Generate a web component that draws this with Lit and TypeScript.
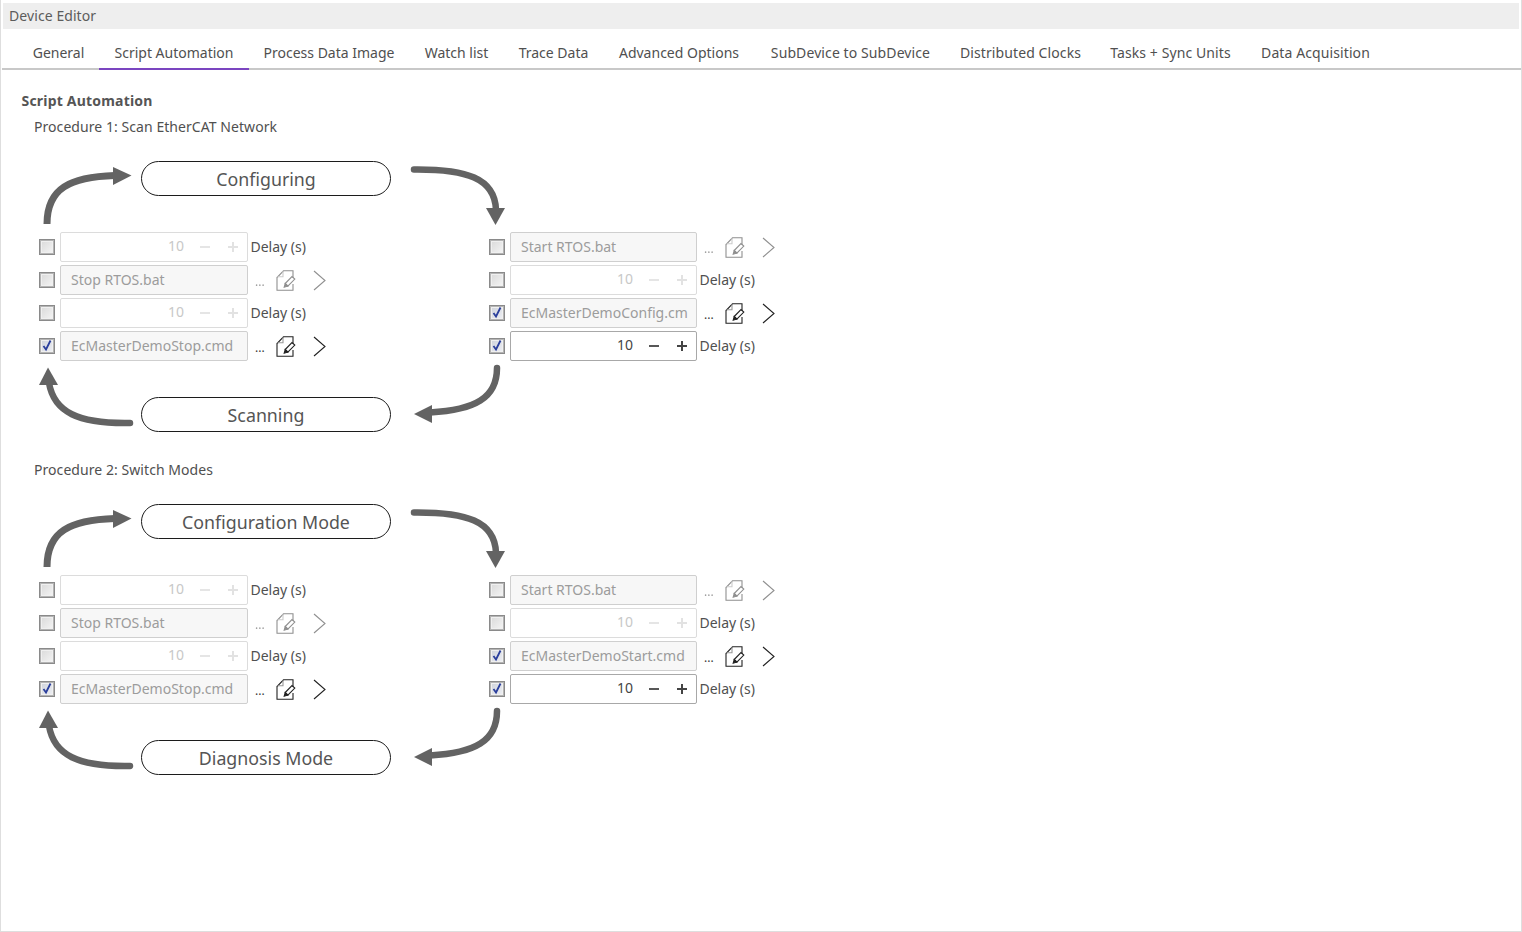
import { LitElement, html, css, svg } from "lit";
import { customElement, property } from "lit/decorators.js";

const TABS: { label: string; width: number; wide?: boolean }[] = [
  { label: "General", width: 81 },
  { label: "Script Automation", width: 150 },
  { label: "Process Data Image", width: 160 },
  { label: "Watch list", width: 95 },
  { label: "Trace Data", width: 99 },
  { label: "Advanced Options", width: 152 },
  { label: "SubDevice to SubDevice", width: 191, wide: true },
  { label: "Distributed Clocks", width: 149, wide: true },
  { label: "Tasks + Sync Units", width: 151, wide: true },
  { label: "Data Acquisition", width: 139, wide: true },
];

type Row = { kind: "delay" | "file"; checked: boolean; name?: string };

@customElement("script-row")
class ScriptRow extends LitElement {
  @property({ type: Object }) row!: Row;
  static styles = css`
    :host { display: flex; align-items: center; height: 30px; color: #505050; }
    .cb { width: 16px; height: 16px; border: 1px solid #8a8a8a; box-sizing: border-box; margin-right: 5px; background: linear-gradient(135deg, #d8d8d8, #f6f6f6); box-shadow: inset 0 0 0 1px #b4b4b4, inset 0 0 0 2px #f0f0f0; position: relative; flex: none; }
    .cb svg { position: absolute; left: 0; top: -1px; }
    .cb.on { background: linear-gradient(135deg, #cdd1da, #f0f1f5); }
    .box { width: var(--field-width, 188px); height: 30px; box-sizing: border-box; border: 1px solid #dcdcdc; border-radius: 2px; display: flex; align-items: center; flex: none; }
    .file { background: #f7f7f7; border-color: #cfcfcf; color: #9c9c9c; padding: 0 0 2px 10px; overflow: hidden; white-space: nowrap; }
    .spin { background: #fff; color: #c8c8c8; justify-content: flex-end; padding: 0 9px 0 0; }
    .spin.on { border-color: #a8a8a8; color: #444; }
    .num { margin-right: 16px; padding-bottom: 3px; }
    .spin svg { display: block; }
    .spin .minus { color: #e2e2e2; }
    .spin .plus { color: #e2e2e2; margin-left: 18px; }
    .spin.on .minus, .spin.on .plus { color: #444; }
    .label { margin-left: 2.5px; padding-bottom: 2px; }
    .dots { margin-left: 7px; width: 20.5px; font-size: 12px; padding-top: 2px; color: #3a3a3a; }
    .doc { margin-right: 17.5px; display: block; }
    .off { opacity: 0.5; }
  `;
  render() {
    const r = this.row;
    const cb = html`<span class="cb ${r.checked ? "on" : ""}">${r.checked ? html`<svg width="15" height="15" viewBox="0 0 15 15"><path d="M3.5 8 L6 11.5 L10.5 2.5" fill="none" stroke="#2b3f9c" stroke-width="1.8"/></svg>` : ""}</span>`;
    if (r.kind === "delay") {
      return html`${cb}<div class="box spin ${r.checked ? "on" : ""}"><span class="num">10</span>
        <svg class="minus" width="10" height="10" viewBox="0 0 10 10"><path d="M0 5H10" stroke="currentColor" stroke-width="1.8"/></svg>
        <svg class="plus" width="10" height="10" viewBox="0 0 10 10"><path d="M0 5H10M5 0V10" stroke="currentColor" stroke-width="2"/></svg>
      </div><span class="label">Delay (s)</span>`;
    }
    return html`${cb}<div class="box file">${r.name}</div>
      <span class="dots ${r.checked ? "" : "off"}">...</span>
      <svg class="doc ${r.checked ? "" : "off"}" width="20" height="21" viewBox="0 0 20 21" fill="none" stroke="#222" stroke-width="1.1">
        <path d="M17 8V.8H7.5L1 7.5V20.2H17V14"/>
        <path d="M7 1.2V6.8H1.5" stroke="#999"/>
        <path d="M9.2 13.5L16 6.5l2.8 2.6-7 7Z"/>
        <path d="M8.2 17.2L9.2 13.5l2.6 2.6Z" fill="#222"/>
      </svg>
      <svg class="${r.checked ? "" : "off"}" width="13" height="21" viewBox="0 0 13 21" fill="none" stroke="#222" stroke-width="1.1"><path d="M1 1 L12 10.5 L1 20"/></svg>`;
  }
}

const ARROWS = svg`
  <path d="M47 224 C47 188 70 177 115 175.5" fill="none" stroke="#636363" stroke-width="7"/>
  <path d="M113 167 L131.5 175.5 L113 185Z" fill="#636363"/>
  <path d="M414 169.5 C466 169 495 178 496 210" fill="none" stroke="#636363" stroke-width="6.5" stroke-linecap="round"/>
  <path d="M486 208 L505 208 L495.5 225Z" fill="#636363"/>
  <path d="M497 368 C497 398 475 410 430 412.5" fill="none" stroke="#636363" stroke-width="6.5" stroke-linecap="round"/>
  <path d="M432 405 L414 414 L432 423Z" fill="#636363"/>
  <path d="M130 423 C78 424 54 412 49 383" fill="none" stroke="#636363" stroke-width="6.5" stroke-linecap="round"/>
  <path d="M39 385 L48 367.5 L58 385Z" fill="#636363"/>
`;

@customElement("proc-block")
class ProcBlock extends LitElement {
  @property() title = "";
  @property() top = "";
  @property() bottom = "";
  @property() startName = "";
  static styles = css`
    :host { display: block; position: relative; width: 800px; height: 343px; }
    .title { margin: 0 0 0 33px; line-height: 20px; height: 20px; color: #505050; letter-spacing: 0.06px; }
    .pill { width: 250px; height: 35px; box-sizing: border-box; border: 1.5px solid #1c1c1c; border-radius: 18px; display: flex; align-items: center; justify-content: center; font-size: 17.8px; color: #555; margin-left: 140px; }
    .p1 { margin-top: 24px; }
    .p2 { margin-top: 36px; }
    .cols { display: flex; margin-top: 36px; margin-left: 38px; }
    .col { width: 450px; flex: none; display: flex; flex-direction: column; gap: 3px; }
    .col.right { --field-width: 187px; }
    .arrows { position: absolute; left: -1px; top: 0; width: 800px; height: 343px; overflow: visible; pointer-events: none; filter: blur(0.4px); }
  `;
  render() {
    const l: Row[] = [
      { kind: "delay", checked: false },
      { kind: "file", checked: false, name: "Stop RTOS.bat" },
      { kind: "delay", checked: false },
      { kind: "file", checked: true, name: "EcMasterDemoStop.cmd" },
    ];
    const r: Row[] = [
      { kind: "file", checked: false, name: "Start RTOS.bat" },
      { kind: "delay", checked: false },
      { kind: "file", checked: true, name: this.startName },
      { kind: "delay", checked: true },
    ];
    return html`
      <div class="title">${this.title}</div>
      <div class="pill p1">${this.top}</div>
      <div class="cols">
        <div class="col">${l.map((x) => html`<script-row .row=${x}></script-row>`)}</div>
        <div class="col right">${r.map((x) => html`<script-row .row=${x}></script-row>`)}</div>
      </div>
      <div class="pill p2">${this.bottom}</div>
      <svg class="arrows" viewBox="0 117 800 343">${ARROWS}</svg>
    `;
  }
}

@customElement("app-root")
export class AppRoot extends LitElement {
  static styles = css`
    :host { display: block; width: 1522px; height: 932px; box-sizing: border-box; border: 1px solid #dedede; border-top: 0; position: relative; background: #fff; font: 14px "Noto Sans", sans-serif; color: #505050; overflow: hidden; }
    .head { margin: 3px 2px 0 2px; height: 26px; background: #eee; padding-left: 6px; line-height: 25px; color: #5c5c5c; letter-spacing: 0.08px; }
    .tabs { display: flex; height: 39px; margin: 0 0 0 1px; padding-left: 16px; border-bottom: 2px solid #c8c8c8; }
    .tab { line-height: 47px; height: 39px; color: #505050; text-align: center; box-sizing: content-box; white-space: nowrap; flex: none; }
    .tab.wide { letter-spacing: 0.1px; }
    .tab.on { border-bottom: 2px solid #7b45c0; }
    h1 { font-size: 14px; font-weight: 700; margin: 21px 0 0 20.5px; line-height: 20px; color: #555; letter-spacing: 0.2px; }
    .p { margin-top: 6px; }
  `;
  render() {
    return html`
      <div class="head">Device Editor</div>
      <div class="tabs">${TABS.map((t, i) => html`<div class="tab ${i === 1 ? "on" : ""} ${t.wide ? "wide" : ""}" style="width:${t.width}px">${t.label}</div>`)}</div>
      <h1>Script Automation</h1>
      <proc-block class="p" title="Procedure 1: Scan EtherCAT Network" top="Configuring" bottom="Scanning" startName="EcMasterDemoConfig.cm"></proc-block>
      <proc-block title="Procedure 2: Switch Modes" top="Configuration Mode" bottom="Diagnosis Mode" startName="EcMasterDemoStart.cmd"></proc-block>
    `;
  }
}
